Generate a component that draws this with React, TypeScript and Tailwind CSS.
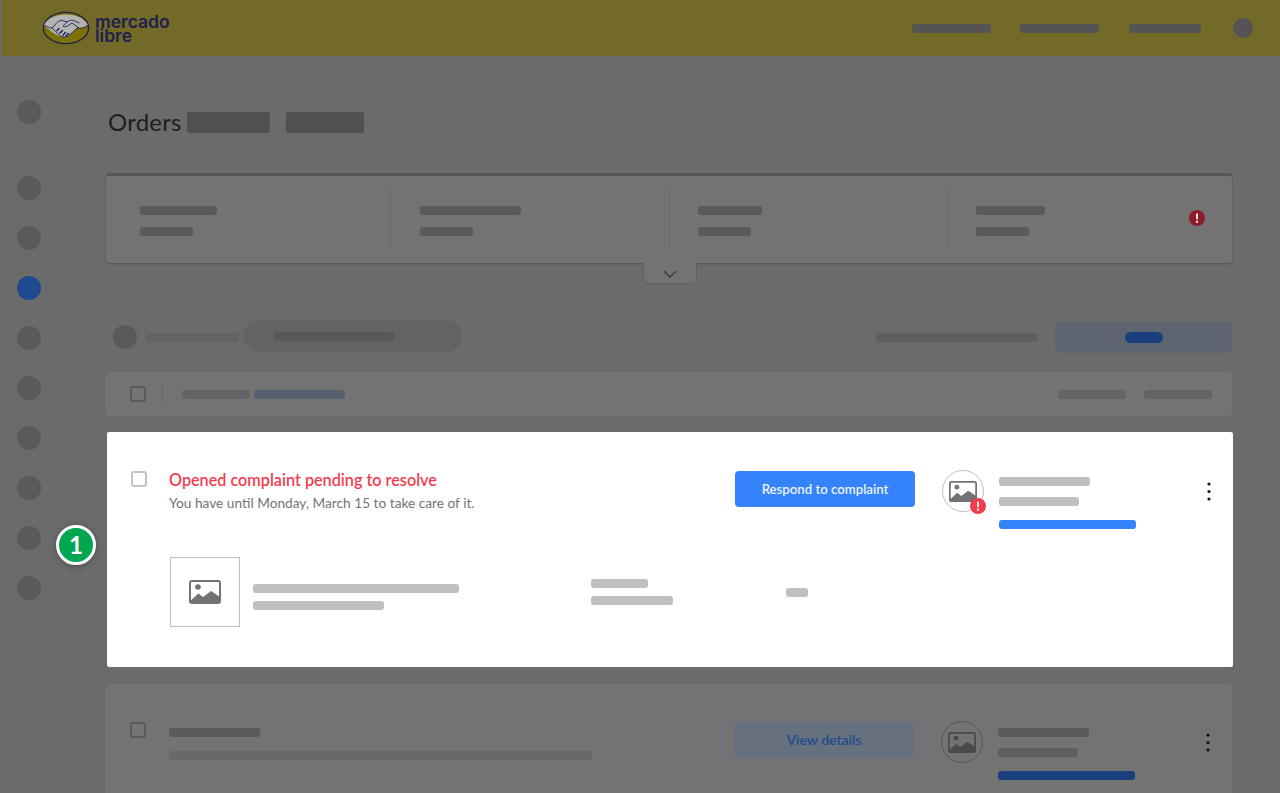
const FONT = "font-['Lato','Open_Sans',sans-serif]";

function Bar({ className }: { className: string }) {
  return <div className={"shrink-0 rounded-[3px] " + className} />;
}

function ImageIcon({ color = "#737373", hole = "#ffffff", className = "" }: { color?: string; hole?: string; className?: string }) {
  return (
    <svg viewBox="0 0 32 24" width="32" height="24" className={className}>
      <rect x="1" y="1" width="30" height="22" rx="2" fill={hole} stroke={color} strokeWidth="2" />
      <circle cx="9" cy="7" r="2.8" fill={color} />
      <path d="M1 21 L9.5 13.5 L14 17 L22 11 L31 17 V23 H1 Z" fill={color} />
    </svg>
  );
}

function Kebab() {
  return (
    <svg width="4" height="19" viewBox="0 0 4 19" className="shrink-0">
      <circle cx="2" cy="2" r="1.6" fill="#111" />
      <circle cx="2" cy="9.5" r="1.6" fill="#111" />
      <circle cx="2" cy="17" r="1.6" fill="#111" />
    </svg>
  );
}

function AlertDot({ size, bg }: { size: number; bg: string }) {
  return (
    <svg width={size} height={size} viewBox="0 0 16 16" className="shrink-0">
      <circle cx="8" cy="8" r="8" fill={bg} />
      <rect x="7" y="3.2" width="2" height="6.4" rx="1" fill="#fff" fillOpacity="0.85" />
      <circle cx="8" cy="11.8" r="1.2" fill="#fff" fillOpacity="0.85" />
    </svg>
  );
}

function Logo() {
  return (
    <div className="flex items-center">
      <svg width="48" height="34" viewBox="0 0 48 34" className="shrink-0">
        <ellipse cx="24" cy="17" rx="22.6" ry="15.6" fill="#7f7200" stroke="#1d2050" strokeWidth="1.4" />
        <path d="M1.8 14 C6 7 14 3.5 24 3.5 C34 3.5 42 7 46 14 C42 17 38 17.5 35 17 L28 24 C25 27 21 26 18 25 C14 24 9 21 7 18 C5 17 3 15.5 1.8 14 Z" fill="#b4b4b4" />
        <path d="M2 14 C5 16 8 17 10 17 L18 24.5 C20 26.5 24 26.5 27 24.5 L35 17 C39 18 43 16.5 46 14" fill="none" stroke="#1d2050" strokeWidth="0.9" />
        <path d="M10 17 L15 11.5 C17 9.5 20 9 22 10 L25 11 L21 15 C23 16.5 25 15.5 27 14 L30 12 L37 17" fill="none" stroke="#1d2050" strokeWidth="0.9" />
        <path d="M25 11 C28 8.5 31 9 34 10.5 L37.5 12" fill="none" stroke="#1d2050" strokeWidth="0.9" />
        <path d="M15 19.5 L17 17.5 M18 22 L20.5 19.5 M21 24 L23.5 21.5 M24 25 L26.5 22.5" stroke="#1d2050" strokeWidth="1.5" strokeLinecap="round" />
      </svg>
      <div className="ml-[5px] mt-[1px] font-['Inter',sans-serif] text-[17.5px] leading-[14px] font-semibold text-[#1d2050]">
        mercado
        <br />
        libre
      </div>
    </div>
  );
}

const sideDots = ["#5a5a5a", "#5a5a5a", "#5a5a5a", "#1e4b8f", "#5a5a5a", "#5a5a5a", "#5a5a5a", "#5a5a5a", "#5a5a5a", "#5a5a5a"];

const stats = [
  { cls: "w-[285px] pl-[34px] border-r", w: "w-[77px]" },
  { cls: "w-[279px] pl-[29px] border-r", w: "w-[101px]" },
  { cls: "w-[279px] pl-[28px] border-r", w: "w-[64px]" },
  { cls: "w-[283px] pl-[27px]", w: "w-[69px]" },
];

export default function App() {
  return (
    <div className={"relative h-[793px] w-[1280px] overflow-hidden bg-[#6b6b6b] " + FONT}>
      <header className="ml-[2px] flex h-14 items-center bg-[#736a27] pl-[40px] pr-[27px]">
        <Logo />
        <div className="ml-auto flex items-center">
          <Bar className="h-[9px] w-[79px] bg-[#545454]" />
          <Bar className="ml-[29px] h-[9px] w-[79px] bg-[#545454]" />
          <Bar className="ml-[30px] h-[9px] w-[72px] bg-[#545454]" />
          <div className="ml-[32px] h-5 w-5 rounded-full bg-[#545454]" />
        </div>
      </header>

      <div className="flex">
        <aside className="flex w-[106px] shrink-0 flex-col pl-[17px] pt-[44px]">
          {sideDots.map((c, i) => (
            <div
              key={i}
              style={{ backgroundColor: c }}
              className={"h-6 w-6 rounded-full " + (i === 0 ? "mb-[52px]" : "mb-[26px]")}
            />
          ))}
        </aside>

        <main className="w-[1126px] shrink-0 pt-[56px]">
          <div className="flex h-[21px] items-center pl-[2px]">
            <h1 className="-translate-y-px text-[24px] leading-[21px] font-normal tracking-[0.2px] text-[#1e1e1e]">Orders</h1>
            <Bar className="ml-[5px] h-[21px] w-[83px] bg-[#505050]" />
            <Bar className="ml-4 h-[21px] w-[78px] bg-[#505050]" />
          </div>

          <section className="mt-[40px] h-[90px] rounded-[4px] border-t-[3px] border-[#565656] bg-[#737373] pt-3 shadow-[0_1px_2px_rgba(0,0,0,0.25)]">
            <div className="flex">
              {stats.map((s, i) => (
                <div key={i} className={"flex h-[61px] flex-col gap-3 border-[#686868] pt-[18px] " + s.cls}>
                  <Bar className={"h-[9px] bg-[#5a5a5a] " + s.w} />
                  <Bar className="h-[9px] w-[53px] bg-[#5a5a5a]" />
                </div>
              ))}
            </div>
            <div className="absolute left-[1189px] top-[210px]">
              <AlertDot size={16} bg="#8c1c2c" />
            </div>
          </section>
          <div className="ml-[537px] flex h-[21px] w-[54px] items-center justify-center rounded-b-[5px] border border-t-0 border-[#5f5f5f] bg-[#737373] pt-[1px]">
            <svg width="14" height="8" viewBox="0 0 14 8">
              <path d="M1 1 L7 7 L13 1" fill="none" stroke="#3a3a3a" strokeWidth="1.4" />
            </svg>
          </div>

          <div className="mt-[36px] flex h-[33px] items-start justify-between">
            <div className="flex items-start pl-[7px]">
              <div className="mt-[5px] h-6 w-6 rounded-full bg-[#5a5a5a]" />
              <Bar className="ml-[9px] mt-[13px] h-[9px] w-[93px] bg-[#636363]" />
              <div className="ml-1 h-[32px] w-[219px] rounded-full bg-[#636363] pl-[31px] pt-3">
                <Bar className="h-[9px] w-[120px] bg-[#585858]" />
              </div>
            </div>
            <div className="flex items-center self-end">
              <Bar className="h-[9px] w-[161px] bg-[#5e5e5e]" />
              <div className="ml-[18px] flex h-[31px] w-[177px] items-center justify-center rounded-[4px] bg-[#5f6570]">
                <div className="h-[11px] w-[38px] rounded-full bg-[#1a3f7d]" />
              </div>
            </div>
          </div>

          <div className="mt-[19px] flex h-[44px] items-center rounded-[4px] bg-[#737373] pl-[24px] pr-[20px]">
            <div className="h-4 w-4 rounded-[3px] border-2 border-[#5a5a5a]" />
            <div className="ml-4 h-5 w-px bg-[#666666]" />
            <Bar className="ml-[19px] h-[9px] w-[68px] bg-[#646464]" />
            <Bar className="ml-1 h-[9px] w-[91px] bg-[#556070]" />
            <Bar className="ml-auto h-[9px] w-[68px] bg-[#646464]" />
            <Bar className="ml-[18px] h-[9px] w-[68px] bg-[#646464]" />
          </div>

          <article className="ml-px mr-[-1px] mt-4 h-[235px] rounded-[2px] bg-white pl-6 pt-[38px]">
            <div className="flex items-start">
              <div className="mt-px h-4 w-4 shrink-0 rounded-[3px] border-2 border-[#c4c4c4]" />
              <div className="ml-[22px] w-[566px] shrink-0">
                <div className="flex h-[22px] -translate-y-px items-center text-[16.2px] leading-[22px] font-semibold text-[#f23d4f]">
                  Opened complaint pending to resolve
                </div>
                <div className="mt-[1px] text-[13.7px] leading-[20px] text-[#737373]">
                  You have until Monday, March 15 to take care of it.
                </div>
              </div>
              <div className="mt-px flex h-9 w-[180px] shrink-0 items-center justify-center rounded-[4px] bg-[#3483fa] pt-[1px] text-[13.2px] font-semibold text-white/90">
                Respond to complaint
              </div>
              <div className="relative ml-[27px] flex h-[42px] w-[42px] shrink-0 items-center justify-center rounded-full border border-[#bfbfbf]">
                <ImageIcon className="h-[21px] w-[28px]" />
                <div className="absolute left-[27px] top-[27px] flex">
                  <AlertDot size={16} bg="#f23d4f" />
                </div>
              </div>
              <div className="ml-[15px] flex w-[137px] shrink-0 flex-col pt-[7px]">
                <Bar className="h-[9px] w-[91px] bg-[#bfbfbf]" />
                <Bar className="mt-[11px] h-[9px] w-[80px] bg-[#bfbfbf]" />
                <Bar className="mt-[14px] h-[9px] w-[137px] bg-[#3483fa]" />
              </div>
              <div className="ml-[71px] mt-[12px]">
                <Kebab />
              </div>
            </div>
            <div className="ml-[39px] mt-[28px] flex items-start">
              <div className="flex h-[70px] w-[70px] shrink-0 items-center justify-center border border-[#bfbfbf]">
                <ImageIcon />
              </div>
              <div className="ml-[13px] w-[338px] shrink-0 pt-[27px]">
                <Bar className="h-[9px] w-[206px] bg-[#bfbfbf]" />
                <Bar className="mt-2 h-[9px] w-[131px] bg-[#bfbfbf]" />
              </div>
              <div className="w-[195px] shrink-0 pt-[22px]">
                <Bar className="h-[9px] w-[57px] bg-[#bfbfbf]" />
                <Bar className="mt-2 h-[9px] w-[82px] bg-[#bfbfbf]" />
              </div>
              <div className="pt-[31px]">
                <Bar className="h-[9px] w-[22px] bg-[#bfbfbf]" />
              </div>
            </div>
          </article>

          <article className="mt-[17px] h-[200px] rounded-[4px] bg-[#737373] pl-6 pt-[37px]">
            <div className="flex items-start">
              <div className="mt-px h-4 w-4 shrink-0 rounded-[3px] border-2 border-[#5a5a5a]" />
              <div className="ml-[23px] w-[565px] shrink-0 pt-[7px]">
                <Bar className="h-[9px] w-[91px] bg-[#5a5a5a]" />
                <Bar className="mt-[14px] h-[9px] w-[423px] bg-[#686868]" />
              </div>
              <div className="mt-px flex h-9 w-[180px] shrink-0 items-center justify-center rounded-[4px] bg-[#66707e] pb-[1px] text-[14px] font-semibold text-[#1e4b8f]">
                View details
              </div>
              <div className="ml-[27px] flex h-[42px] w-[42px] shrink-0 items-center justify-center rounded-full border border-[#555555]">
                <ImageIcon color="#4a4a4a" hole="#737373" className="h-[21px] w-[28px]" />
              </div>
              <div className="ml-[15px] flex w-[137px] shrink-0 flex-col pt-[7px]">
                <Bar className="h-[9px] w-[91px] bg-[#5a5a5a]" />
                <Bar className="mt-[11px] h-[9px] w-[80px] bg-[#5f5f5f]" />
                <Bar className="mt-[14px] h-[9px] w-[137px] bg-[#1a3f7d]" />
              </div>
              <div className="ml-[71px] mt-[12px]">
                <Kebab />
              </div>
            </div>
          </article>
        </main>
      </div>

      <div className="absolute left-[56px] top-[525px] flex h-10 w-10 items-center justify-center rounded-full border-[3px] border-white bg-[#00a650] text-[24px] font-bold text-white shadow-[0_1px_6px_rgba(0,0,0,0.3)]">
        1
      </div>
    </div>
  );
}
